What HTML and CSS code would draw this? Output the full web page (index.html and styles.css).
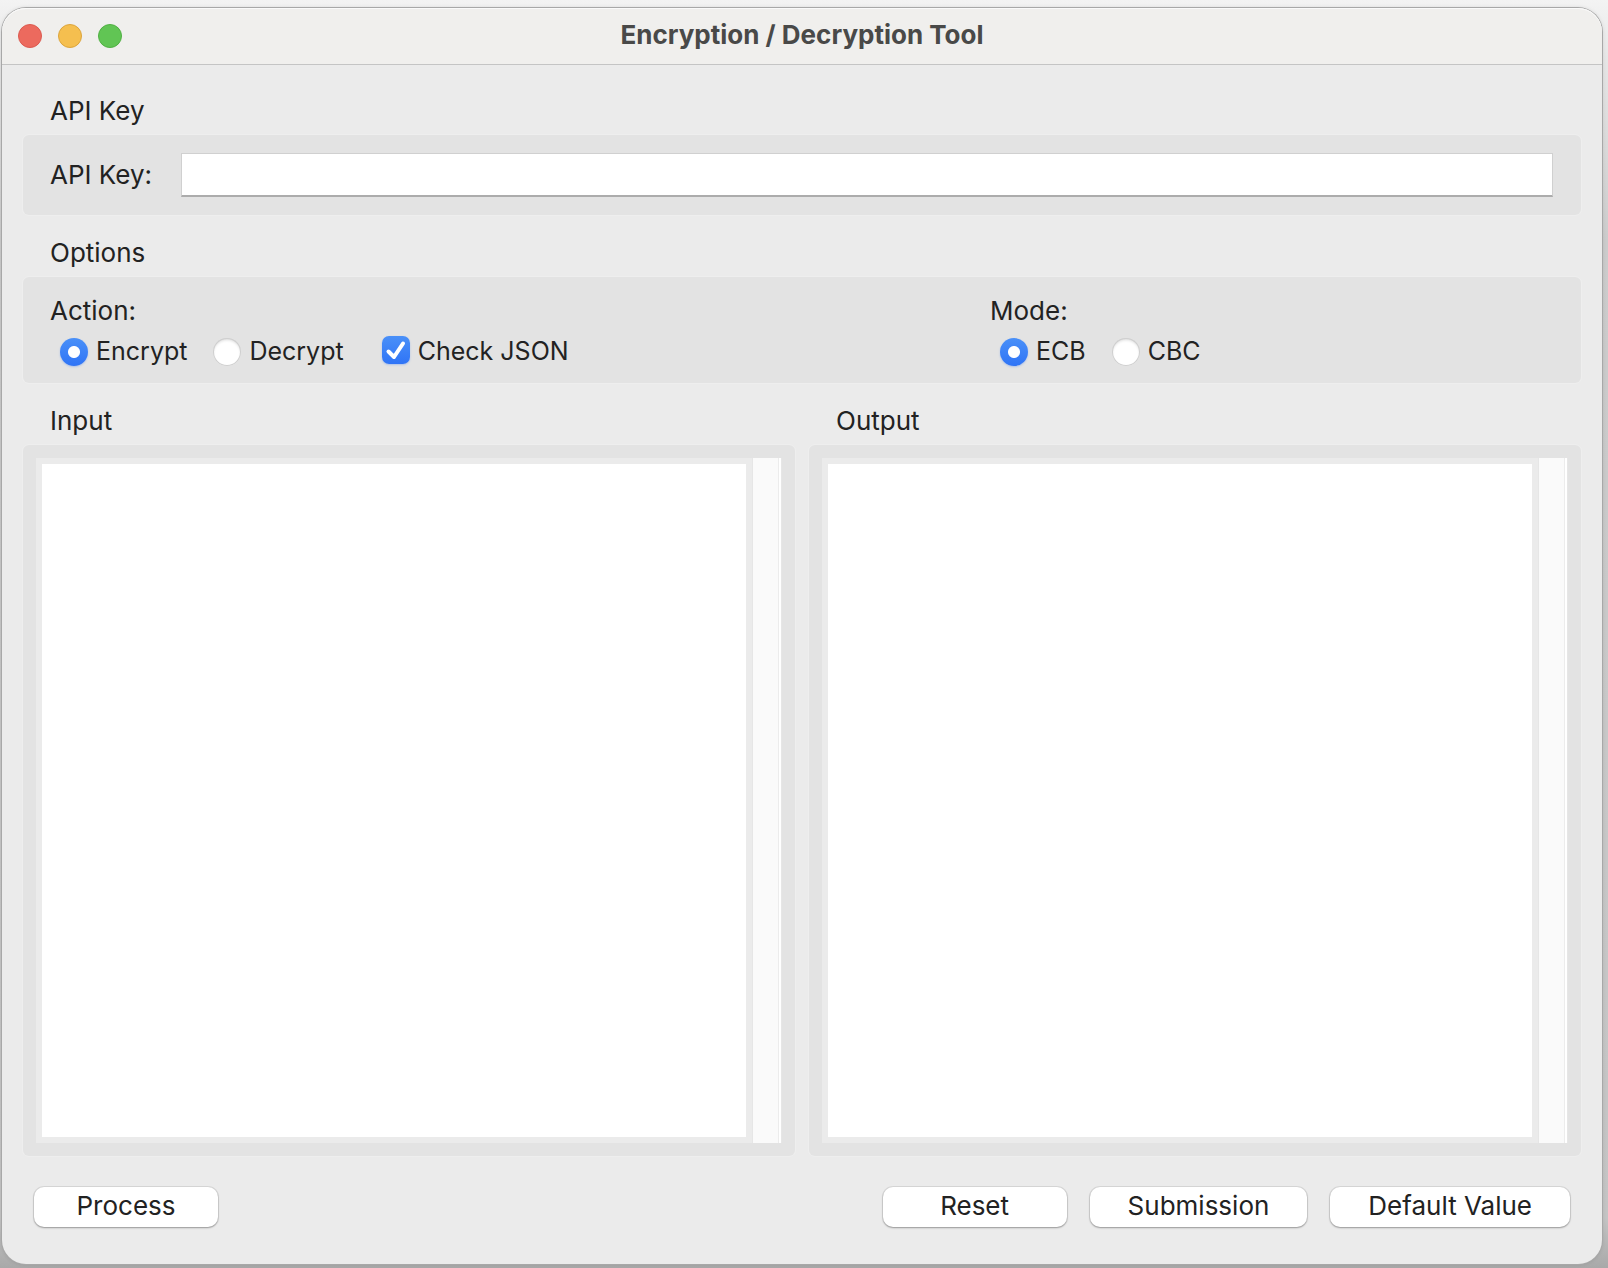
FILE: index.html
```html
<!DOCTYPE html>
<html lang="en">
<head>
<meta charset="utf-8">
<title>Encryption / Decryption Tool</title>
<link rel="stylesheet" href="styles.css">
</head>
<body>
<main class="window">
  <header class="titlebar">
    <div class="lights">
      <button class="light light-close" type="button" aria-label="Close"></button>
      <button class="light light-minimize" type="button" aria-label="Minimize"></button>
      <button class="light light-zoom" type="button" aria-label="Zoom"></button>
    </div>
    <h1 class="title">Encryption / Decryption Tool</h1>
  </header>
  <form class="content">
    <section class="section">
      <h2 class="section-title">API Key</h2>
      <div class="panel key-panel">
        <label for="api-key">API Key:</label>
        <input class="key-input" id="api-key" type="text">
      </div>
    </section>
    <section class="section">
      <h2 class="section-title">Options</h2>
      <div class="panel options-panel">
        <div class="option-group" role="group" aria-labelledby="action-label">
          <span id="action-label">Action:</span>
          <div class="choices">
            <label class="choice"><input class="radio" type="radio" name="action" checked>Encrypt</label>
            <label class="choice"><input class="radio" type="radio" name="action">Decrypt</label>
            <label class="choice choice-check"><span class="check-wrap"><input class="checkbox" type="checkbox" checked><svg class="tick" viewBox="0 0 28 28" aria-hidden="true"><path d="M6.500 15.500 12 21 21 7.500"/></svg></span>Check JSON</label>
          </div>
        </div>
        <div class="option-group" role="group" aria-labelledby="mode-label">
          <span id="mode-label">Mode:</span>
          <div class="choices">
            <label class="choice"><input class="radio" type="radio" name="mode" checked>ECB</label>
            <label class="choice"><input class="radio" type="radio" name="mode">CBC</label>
          </div>
        </div>
      </div>
    </section>
    <div class="editors">
      <section class="section editor">
        <h2 class="section-title"><label for="input-text">Input</label></h2>
        <div class="panel editor-panel">
          <textarea class="text" id="input-text"></textarea>
          <div class="track"></div>
        </div>
      </section>
      <section class="section editor">
        <h2 class="section-title"><label for="output-text">Output</label></h2>
        <div class="panel editor-panel">
          <textarea class="text" id="output-text"></textarea>
          <div class="track"></div>
        </div>
      </section>
    </div>
    <footer class="actions">
      <button class="button button-first" type="button">Process</button>
      <button class="button" type="reset">Reset</button>
      <button class="button" type="button">Submission</button>
      <button class="button" type="button">Default Value</button>
    </footer>
  </form>
</main>
</body>
</html>
```
FILE: styles.css
```css
* {
  box-sizing: border-box;
}

body {
  display: flex;
  min-height: 100vh;
  margin: 0;
  padding: 8px 6px 4px 2px;
  background: linear-gradient(#f3f3f3 0, #e6e6e6 60px, #cccccc 240px, #c4c4c4 96%, #a9a9a9 100%);
  color: #222222;
  font-family: Inter, "Liberation Sans", sans-serif;
  font-size: 26px;
  line-height: 32px;
}

button,
input,
textarea {
  margin: 0;
  color: inherit;
  font: inherit;
}

.window {
  display: flex;
  flex: 1;
  flex-direction: column;
  min-width: 0;
  border-radius: 24px;
  background: #ebebeb;
  box-shadow: 0 0 0 1px #a8a8a8, 0 0 4px rgba(0, 0, 0, 0.15);
}

.titlebar {
  display: grid;
  grid-template-columns: 1fr auto 1fr;
  align-items: center;
  height: 57px;
  padding: 0 16px;
  border-bottom: 1px solid #c4c4c4;
  border-radius: 24px 24px 0 0;
  background: #f0efed;
  box-shadow: inset 0 1px #fafafa;
}

.lights {
  display: flex;
  gap: 16px;
}

.light {
  width: 24px;
  height: 24px;
  padding: 0;
  border: 1px solid;
  border-radius: 50%;
}

.light-close {
  border-color: #dc5a50;
  background: #ec6a5e;
}

.light-minimize {
  border-color: #dca53c;
  background: #f5bf4f;
}

.light-zoom {
  border-color: #50b043;
  background: #61c554;
}

.title {
  margin: 0;
  padding-bottom: 2px;
  color: #494948;
  font-size: 26px;
  font-weight: 700;
}

.content {
  display: flex;
  flex: 1;
  flex-direction: column;
  gap: 22px;
  padding: 30px 21px 37px;
}

.section-title {
  margin: 0 0 8px;
  padding-left: 27px;
  font-size: 26px;
  font-weight: 400;
}

.panel {
  border-radius: 6px;
  background: #e3e3e3;
  box-shadow: 0 0 0 1px #eeeeee;
}

.key-panel {
  display: flex;
  align-items: center;
  gap: 29px;
  padding: 18px 28px 18px 27px;
}

.key-input {
  flex: 1;
  min-width: 0;
  height: 44px;
  padding: 4px 8px;
  border: 1px solid #d0d0d0;
  border-bottom: 2px solid #acacac;
  outline: none;
  background: #ffffff;
}

.options-panel {
  display: grid;
  grid-template-columns: 5fr 3fr;
  padding: 18px 27px 16px;
}

.option-group {
  display: flex;
  flex-direction: column;
  gap: 8px;
}

.choices {
  display: flex;
  gap: 26px;
  padding-left: 10px;
  font-size: 25px;
}

.choice {
  display: flex;
  align-items: center;
  gap: 8px;
}

.choice-check {
  margin-left: 12px;
}

.radio,
.checkbox {
  width: 28px;
  height: 28px;
  appearance: none;
}

.radio {
  margin-top: 2px;
  border-radius: 50%;
  background: #ffffff;
  box-shadow: inset 0 0 0 1px #cfcfcf, inset 0 2px 3px rgba(0, 0, 0, 0.15);
}

.radio:checked {
  background: radial-gradient(circle, #ffffff 5.5px, transparent 6.5px), linear-gradient(#4a90f8, #2f74f6);
  box-shadow: 0 1px 2px rgba(47, 116, 246, 0.3);
}

.check-wrap {
  display: grid;
  margin-bottom: 2px;
}

.checkbox,
.tick {
  grid-area: 1 / 1;
}

.checkbox {
  border-radius: 7px;
  background: #ffffff;
}

.checkbox:checked {
  background: linear-gradient(#4a90f8, #2f74f6);
  box-shadow: 0 1px 2px rgba(47, 116, 246, 0.3);
}

.tick {
  width: 28px;
  height: 28px;
  fill: none;
  stroke: #ffffff;
  stroke-width: 4;
  stroke-linecap: round;
  stroke-linejoin: round;
  pointer-events: none;
  visibility: hidden;
}

.checkbox:checked + .tick {
  visibility: visible;
}

.editors {
  display: grid;
  flex: 1;
  grid-template-columns: 1fr 1fr;
  gap: 14px;
}

.editor {
  display: flex;
  flex-direction: column;
}

.editor-panel {
  display: flex;
  flex: 1;
  padding: 13px;
}

.text {
  flex: 1;
  min-width: 0;
  min-height: 200px;
  border: 6px solid #ebebeb;
  outline: none;
  background: #ffffff;
  resize: none;
}

.track {
  width: 30px;
  border: solid #e6e6e6;
  border-width: 0 1px;
  background: #fafafa;
  box-shadow: inset -2px 0 #ffffff, inset -3px 0 #ececec;
}

.actions {
  display: flex;
  gap: 23px;
  padding: 9px 11px 0;
}

.button {
  min-width: 184px;
  height: 40px;
  padding: 0 38px 2px;
  border: 0;
  border-radius: 10px;
  background: #ffffff;
  box-shadow: 0 0 0 1px rgba(0, 0, 0, 0.08), 0 1px 2px rgba(0, 0, 0, 0.3);
}

.button-first {
  margin-right: auto;
}
```
